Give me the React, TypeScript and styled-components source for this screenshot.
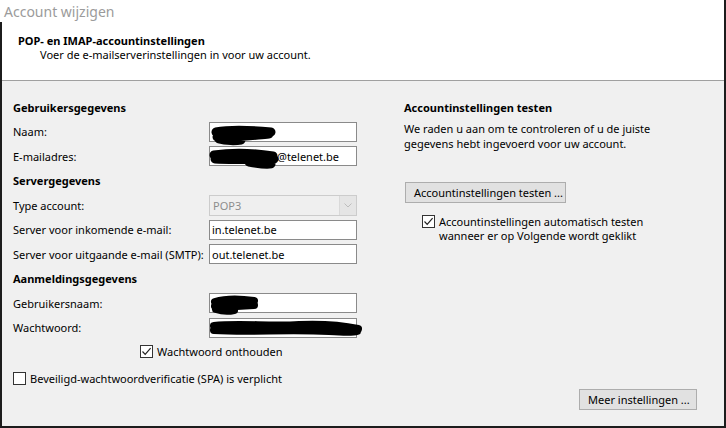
import React from "react";
import styled, { createGlobalStyle } from "styled-components";

const GlobalStyle = createGlobalStyle`
  html, body {
    margin: 0;
    padding: 0;
    background: #ffffff;
  }
  body {
    font-family: "Noto Sans", "Open Sans", sans-serif;
    font-size: 11px;
    color: #000000;
  }
`;

const Window = styled.div`
  width: 726px;
  height: 428px;
  box-sizing: border-box;
  display: flex;
  flex-direction: column;
  border-right: 2px solid #1c1c1c;
  border-bottom: 2px solid #1c1c1c;
  overflow: hidden;
`;

const TitleBar = styled.div`
  height: 22px;
  flex: none;
  display: flex;
  align-items: center;
  padding-left: 4px;
  font-size: 14px;
  color: #9b9b9b;
  background: #ffffff;
`;

const Client = styled.div`
  flex: 1;
  display: flex;
  flex-direction: column;
  border-left: 2px solid #1c1c1c;
  min-height: 0;
`;

const Header = styled.div`
  height: 59px;
  flex: none;
  box-sizing: border-box;
  padding: 13px 0 0 16px;
  background: #ffffff;
  border-bottom: 1px solid #a0a0a0;
`;

const HeaderTitle = styled.div`
  font-weight: 700;
  line-height: 12px;
`;

const HeaderSub = styled.div`
  padding-left: 22px;
  margin-top: 2px;
  line-height: 12px;
`;

const Body = styled.div`
  flex: 1;
  display: flex;
  flex-direction: column;
  background: #f0f0f0;
  min-height: 0;
`;

const Columns = styled.div`
  height: 308px;
  flex: none;
  display: flex;
  gap: 47px;
  padding-left: 11px;
  padding-top: 14px;
  box-sizing: border-box;
`;

const LeftColumn = styled.div`
  width: 344px;
  display: flex;
  flex-direction: column;
`;

const RightColumn = styled.div`
  width: 290px;
  display: flex;
  flex-direction: column;
`;

const Row = styled.div<{ $indent?: number }>`
  height: 24.5px;
  flex: none;
  display: flex;
  align-items: center;
  padding-left: ${(p) => p.$indent ?? 0}px;
`;

const SectionTitle = styled.div`
  font-weight: 700;
`;

const Label = styled.div`
  width: 196px;
  flex: none;
  white-space: nowrap;
`;

const FieldBox = styled.div`
  position: relative;
  width: 148px;
  height: 20px;
`;

const TextInput = styled.input<{ $indent?: number }>`
  width: 100%;
  height: 100%;
  box-sizing: border-box;
  margin: 0;
  border: 1px solid #8a8a8a;
  background: #ffffff;
  padding: 0 0 0 ${(p) => p.$indent ?? 2}px;
  font: inherit;
  color: #000000;
  outline: none;
`;

const SelectBox = styled.div`
  width: 148px;
  height: 21px;
  box-sizing: border-box;
  display: flex;
  border: 1px solid #cccccc;
  background: #efefef;
  color: #8d8d8d;
`;

const SelectValue = styled.div`
  flex: 1;
  display: flex;
  align-items: center;
  padding-left: 3px;
`;

const SelectArrow = styled.div`
  width: 16px;
  display: flex;
  align-items: center;
  justify-content: center;
  background: #e5e5e5;
  border-left: 1px solid #d9d9d9;
`;

const Redaction = styled.svg`
  position: absolute;
  pointer-events: none;
  overflow: visible;
`;

const CheckRow = styled.label<{ $indent?: number }>`
  display: flex;
  align-items: flex-start;
  gap: 4px;
  padding-left: ${(p) => p.$indent ?? 0}px;
  line-height: 14px;
`;

const Box = styled.span`
  width: 13px;
  height: 13px;
  flex: none;
  box-sizing: border-box;
  border: 1px solid #333333;
  background: #ffffff;
  display: flex;
  align-items: center;
  justify-content: center;
`;

const SpaRow = styled.div`
  height: 20px;
  margin-top: 4.5px;
  display: flex;
  align-items: center;
`;

const Paragraph = styled.div`
  line-height: 15px;
  margin-top: 1px;
`;

const Button = styled.button<{ $width: number }>`
  width: ${(p) => p.$width}px;
  height: 21px;
  box-sizing: border-box;
  margin: 0;
  padding: 0 0 0 8px;
  text-align: left;
  font: inherit;
  color: #000000;
  background: #e1e1e1;
  border: 1px solid #adadad;
`;

const TestButton = styled(Button)`
  margin-top: 31.5px;
  margin-left: 1px;
`;

const AutoTest = styled.div`
  margin-top: 12px;
`;

const Footer = styled.div`
  flex: 1;
  display: flex;
  justify-content: flex-end;
  align-items: flex-start;
  padding-right: 27px;
`;

function Check({ checked }: { checked?: boolean }) {
  return (
    <Box>
      {checked && (
        <svg width="11" height="11" viewBox="0 0 11 11">
          <path d="M1.5 5.5 L4.2 8.3 L9.6 2.2" fill="none" stroke="#222" strokeWidth="1.2" />
        </svg>
      )}
    </Box>
  );
}

function Scribble({ d, left, top, width, height, weight }: { d: string; left: number; top: number; width: number; height: number; weight: number }) {
  return (
    <Redaction style={{ left, top, width, height }} viewBox={`0 0 ${width} ${height}`}>
      <path d={d} fill="none" stroke="#000" strokeWidth={weight} strokeLinecap="round" strokeLinejoin="round" />
    </Redaction>
  );
}

export default function App() {
  return (
    <>
      <GlobalStyle />
      <Window>
        <TitleBar>Account wijzigen</TitleBar>
        <Client>
          <Header>
            <HeaderTitle>POP- en IMAP-accountinstellingen</HeaderTitle>
            <HeaderSub>Voer de e-mailserverinstellingen in voor uw account.</HeaderSub>
          </Header>
          <Body>
            <Columns>
              <LeftColumn>
                <Row>
                  <SectionTitle>Gebruikersgegevens</SectionTitle>
                </Row>
                <Row>
                  <Label>Naam:</Label>
                  <FieldBox>
                    <TextInput readOnly value="" />
                    <Scribble left={2} top={3} width={66} height={18} weight={9} d="M5 7 C20 4 40 5 60 7 M6 12 C25 13 45 10 58 9 M8 14 C15 16 25 16 30 15" />
                  </FieldBox>
                </Row>
                <Row>
                  <Label>E-mailadres:</Label>
                  <FieldBox>
                    <TextInput readOnly value="@telenet.be" $indent={67} />
                    <Scribble left={0} top={2} width={68} height={20} weight={9} d="M5 7 C25 4 45 5 64 8 M6 11 C25 12 45 11 65 11 M40 14 C50 16 58 17 62 16" />
                  </FieldBox>
                </Row>
                <Row>
                  <SectionTitle>Servergegevens</SectionTitle>
                </Row>
                <Row>
                  <Label>Type account:</Label>
                  <SelectBox>
                    <SelectValue>POP3</SelectValue>
                    <SelectArrow>
                      <svg width="8" height="5" viewBox="0 0 8 5">
                        <path d="M0.5 0.5 L4 4 L7.5 0.5" fill="none" stroke="#bdbdbd" strokeWidth="1" />
                      </svg>
                    </SelectArrow>
                  </SelectBox>
                </Row>
                <Row>
                  <Label>Server voor inkomende e-mail:</Label>
                  <FieldBox>
                    <TextInput readOnly value="in.telenet.be" />
                  </FieldBox>
                </Row>
                <Row>
                  <Label>Server voor uitgaande e-mail (SMTP):</Label>
                  <FieldBox>
                    <TextInput readOnly value="out.telenet.be" />
                  </FieldBox>
                </Row>
                <Row>
                  <SectionTitle>Aanmeldingsgegevens</SectionTitle>
                </Row>
                <Row>
                  <Label>Gebruikersnaam:</Label>
                  <FieldBox>
                    <TextInput readOnly value="" />
                    <Scribble left={1} top={2} width={50} height={18} weight={8} d="M5 7 C15 4 30 4 44 6 M5 11 C15 12 30 11 44 10 M6 14 C12 16 20 16 24 15" />
                  </FieldBox>
                </Row>
                <Row>
                  <Label>Wachtwoord:</Label>
                  <FieldBox>
                    <TextInput readOnly value="" />
                    <Scribble left={0} top={2} width={154} height={17} weight={8} d="M5 6 C30 3 60 7 90 5 C115 4 135 6 149 9 M5 10 C40 12 80 9 120 11 C135 12 145 12 148 11" />
                  </FieldBox>
                </Row>
                <Row $indent={127}>
                  <CheckRow>
                    <Check checked />
                    <span>Wachtwoord onthouden</span>
                  </CheckRow>
                </Row>
                <SpaRow>
                  <CheckRow>
                    <Check />
                    <span>Beveiligd-wachtwoordverificatie (SPA) is verplicht</span>
                  </CheckRow>
                </SpaRow>
              </LeftColumn>
              <RightColumn>
                <Row>
                  <SectionTitle>Accountinstellingen testen</SectionTitle>
                </Row>
                <Paragraph>
                  We raden u aan om te controleren of u de juiste
                  <br />
                  gegevens hebt ingevoerd voor uw account.
                </Paragraph>
                <TestButton $width={161}>Accountinstellingen testen ...</TestButton>
                <AutoTest>
                  <CheckRow $indent={18}>
                    <Check checked />
                    <span>
                      Accountinstellingen automatisch testen
                      <br />
                      wanneer er op Volgende wordt geklikt
                    </span>
                  </CheckRow>
                </AutoTest>
              </RightColumn>
            </Columns>
            <Footer>
              <Button $width={118}>Meer instellingen ...</Button>
            </Footer>
          </Body>
        </Client>
      </Window>
    </>
  );
}
